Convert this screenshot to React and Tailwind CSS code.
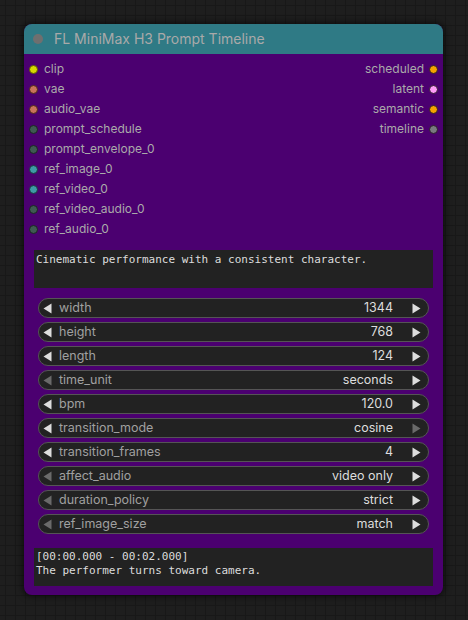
import React from "react";

const inputs = [
  ["clip", "#d8d800", "#5a5a00"],
  ["vae", "#c9745a", "#4a2818"],
  ["audio_vae", "#c9745a", "#4a2818"],
  ["prompt_schedule", "#3f5a52", "#1a2622"],
  ["prompt_envelope_0", "#3f5a52", "#1a2622"],
  ["ref_image_0", "#3f9aa6", "#17363c"],
  ["ref_video_0", "#3f9aa6", "#17363c"],
  ["ref_video_audio_0", "#3f5a52", "#1a2622"],
  ["ref_audio_0", "#3f5a52", "#1a2622"],
];

const outputs = [
  ["scheduled", "#f5a300"],
  ["latent", "#ff9cf9"],
  ["semantic", "#f5a300"],
  ["timeline", "#7a7a80"],
];

const widgets = [
  ["width", "1344", true, true],
  ["height", "768", true, true],
  ["length", "124", true, true],
  ["time_unit", "seconds", false, true],
  ["bpm", "120.0", true, true],
  ["transition_mode", "cosine", true, false],
  ["transition_frames", "4", true, true],
  ["affect_audio", "video only", false, true],
  ["duration_policy", "strict", false, true],
  ["ref_image_size", "match", false, true],
];

function LeftArrow({ on }) {
  return (
    <svg width="9" height="11" viewBox="0 0 9 11" className="shrink-0">
      <polygon points="8.5,0.5 8.5,10.5 0.5,5.5" fill={on ? "#dddddd" : "#6a6a6a"} />
    </svg>
  );
}
function RightArrow({ on }) {
  return (
    <svg width="9" height="11" viewBox="0 0 9 11" className="shrink-0">
      <polygon points="0.5,0.5 0.5,10.5 8.5,5.5" fill={on ? "#dddddd" : "#6a6a6a"} />
    </svg>
  );
}

export default function App() {
  return (
    <div
      className="w-[468px] h-[620px] overflow-hidden bg-[#1e1e1e] bg-[linear-gradient(to_right,#181818_1px,transparent_1px),linear-gradient(to_bottom,#181818_1px,transparent_1px)] bg-[size:10px_10px] bg-[position:5px_5px] pt-[24px] pl-[24px]"
      style={{ fontFamily: "Inter, 'Noto Sans', sans-serif" }}
    >
      <div className="w-[419px] h-[571px] rounded-[8px] bg-[#4b0070] shadow-[0_0_6px_2px_rgba(0,0,0,0.5)] flex flex-col overflow-hidden">
        <div className="h-[30px] bg-[#2f7a85] flex items-center pl-[9px] gap-[11px] shrink-0">
          <div className="w-[10px] h-[10px] rounded-full bg-[#6f6f6f]" />
          <span className="text-[14px] text-[#a9a9a9] leading-none">FL MiniMax H3 Prompt Timeline</span>
        </div>
        <div className="flex justify-between pt-[5px]">
          <div className="flex flex-col">
            {inputs.map(([name, c, b]) => (
              <div key={name} className="h-[20px] flex items-center pl-[5px] gap-[6px]">
                <div
                  className="w-[9px] h-[9px] rounded-full border"
                  style={{ backgroundColor: c, borderColor: b }}
                />
                <span className="text-[12px] text-[#aaaaaa] leading-none">{name}</span>
              </div>
            ))}
          </div>
          <div className="flex flex-col">
            {outputs.map(([name, c]) => (
              <div key={name} className="h-[20px] flex items-center pr-[5px] gap-[5px] justify-end">
                <span className="text-[12px] text-[#aaaaaa] leading-none">{name}</span>
                <div
                  className="w-[9px] h-[9px] rounded-full border border-[#2a1a2a]"
                  style={{ backgroundColor: c }}
                />
              </div>
            ))}
          </div>
        </div>
        <div className="mx-[10px] mt-[11px] h-[38px] bg-[#222222] px-[2px] pt-[3px]">
          <div
            className="text-[11px] text-[#dddddd] leading-[14px]"
            style={{ fontFamily: "'DejaVu Sans Mono', monospace" }}
          >
            Cinematic performance with a consistent character.
          </div>
        </div>
        <div className="flex flex-col gap-[4px] mt-[10px] mx-[14px]">
          {widgets.map(([label, value, l, r]) => (
            <div
              key={label}
              className="h-[20px] rounded-full bg-[#222222] border border-[#555555] flex items-center pl-[4px] pr-[7px]"
            >
              <LeftArrow on={l} />
              <span className="ml-[7px] text-[12.5px] text-[#a0a0a0] leading-none">{label}</span>
              <span className="ml-auto text-[12.5px] text-[#dddddd] leading-none">{value}</span>
              <span className="ml-[19px]">
                <RightArrow on={r} />
              </span>
            </div>
          ))}
        </div>
        <div className="mx-[10px] mt-[14px] h-[38px] bg-[#222222] px-[2px] pt-[2px]">
          <div
            className="text-[11px] text-[#dddddd] leading-[14px]"
            style={{ fontFamily: "'DejaVu Sans Mono', monospace" }}
          >
            <div>[00:00.000 - 00:02.000]</div>
            <div>The performer turns toward camera.</div>
          </div>
        </div>
      </div>
    </div>
  );
}
